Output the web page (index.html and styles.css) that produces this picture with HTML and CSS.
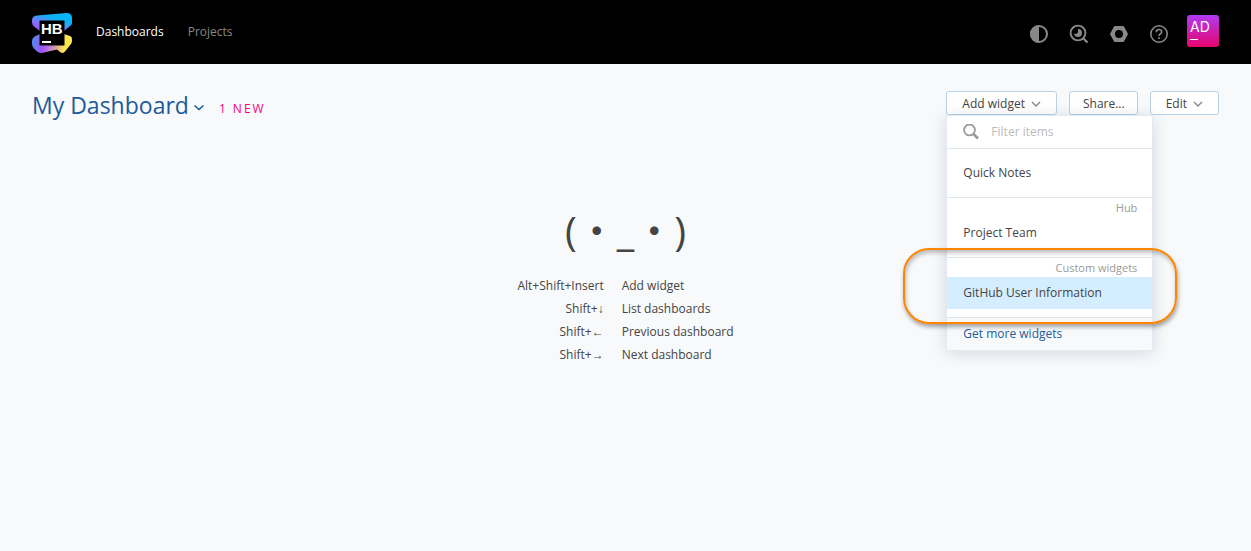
FILE: index.html
```html
<!DOCTYPE html>
<html lang="en">
<head>
<meta charset="utf-8">
<title>My Dashboard</title>
<link rel="stylesheet" href="styles.css">
</head>
<body>
<header class="header">
  <a class="logo" href="#" aria-label="Hub">
    <svg width="40" height="40" viewBox="0 0 40 40">
      <defs>
        <linearGradient id="top" x1="0" y1="0.8" x2="0.45" y2="0.2">
          <stop offset="0" stop-color="#a052ff"/><stop offset="0.45" stop-color="#7a78ff"/><stop offset="1" stop-color="#0cb4f6"/>
        </linearGradient>
        <linearGradient id="bottom" x1="0" y1="0.2" x2="1" y2="0.3">
          <stop offset="0" stop-color="#4a8cf0"/><stop offset="0.32" stop-color="#a052ff"/><stop offset="0.65" stop-color="#d8a5a0"/><stop offset="0.85" stop-color="#fde74a"/>
        </linearGradient>
      </defs>
      <path fill="url(#top)" d="M5 2.500 34.500 0Q40 0 40 5V10Q40 12 38 13L32 18H8L2 13.500Q0 12 0 9V7.500Q0 3 5 2.500Z"/>
      <path fill="url(#bottom)" d="M8 21H32L38 23Q40 23.500 40 26V28Q40 29.500 39 31L33 38.500Q31 41 28 39L25 36.500 11 39.700Q7 40.500 4.500 38L1.500 35Q0 33.500 0 30.500V28Q0 25 2.500 23.500Z"/>
      <path d="M7.500 7.500H32.500V32.500H7.500Z"/>
      <path fill="#fff" d="M10 28H19V30H10Z"/>
      <text class="logo-text" x="9" y="21">HB</text>
    </svg>
  </a>
  <nav class="nav">
    <a class="nav-link nav-link-active" href="#">Dashboards</a>
    <a class="nav-link" href="#">Projects</a>
  </nav>
  <div class="tools">
    <button class="tool" aria-label="Theme"><svg width="20" height="20" viewBox="0 0 20 20"><circle cx="10" cy="10" r="8" fill="none" stroke="currentColor" stroke-width="2"/><path fill="currentColor" d="M10 1a9 9 0 0 0 0 18Z"/></svg></button>
    <button class="tool" aria-label="Search"><svg width="20" height="20" viewBox="0 0 20 20"><circle cx="9" cy="9" r="7.400" fill="none" stroke="currentColor" stroke-width="1.900"/><path d="m14 14 4.500 4.500" stroke="currentColor" stroke-width="2.200"/><path fill="currentColor" d="M9 5a4 4 0 1 1-4 4 2.200 2.200 0 0 0 4-1.200Z"/></svg></button>
    <button class="tool" aria-label="Administration"><svg width="20" height="20" viewBox="0 0 20 20"><path fill="currentColor" fill-rule="evenodd" d="M6 2h8q.7 0 1 .6l3.800 6.800q.3.600 0 1.200L15 17.400q-.3.600-1 .6H6q-.7 0-1-.6L1.200 10.600q-.3-.6 0-1.200L5 2.600Q5.300 2 6 2ZM10 6a4 4 0 1 0 0 8 4 4 0 0 0 0-8Z"/></svg></button>
    <button class="tool" aria-label="Help"><svg width="20" height="20" viewBox="0 0 20 20" fill="none" stroke="currentColor"><circle cx="10" cy="10" r="8.200" stroke-width="1.600"/><path stroke-width="1.700" d="M7.300 8.200C7.300 4.600 12.700 4.700 12.700 8c0 1.900-2.700 1.900-2.700 4M10 13.300V15"/></svg></button>
    <button class="avatar" aria-label="Profile"><span class="avatar-name">AD</span><span class="avatar-line"></span></button>
  </div>
</header>
<main class="page">
  <div class="titlebar">
    <h1 class="title"><button class="title-button">My Dashboard <svg class="title-chevron" width="12" height="8" viewBox="0 0 12 8"><path d="m1.500 1.500 4.500 4 4.500-4" fill="none" stroke="currentColor" stroke-width="1.600"/></svg></button></h1>
    <a class="news" href="#">1 NEW</a>
    <div class="actions">
      <div class="dropdown">
        <button class="button">Add widget <svg class="chevron" width="10" height="6" viewBox="0 0 10 6"><path d="m1 1 4 4 4-4" fill="none" stroke="currentColor" stroke-width="1.400"/></svg></button>
        <div class="menu">
          <label class="filter">
            <svg width="16" height="16" viewBox="0 0 16 16" fill="none" stroke="currentColor"><circle cx="6.500" cy="6" r="5.400" stroke-width="1.800"/><path d="m10.500 10 4.500 4.500" stroke-width="2.600"/></svg>
            <input class="filter-input" type="text" placeholder="Filter items" aria-label="Filter items">
          </label>
          <div class="group group-first"><button class="item">Quick Notes</button></div>
          <div class="group"><div class="group-title">Hub</div><button class="item">Project Team</button></div>
          <div class="group"><div class="group-title">Custom widgets</div><button class="item item-active">GitHub User Information</button></div>
          <a class="more" href="#">Get more widgets</a>
          <div class="highlight"></div>
        </div>
      </div>
      <button class="button button-plain">Share...</button>
      <button class="button">Edit <svg class="chevron" width="10" height="6" viewBox="0 0 10 6"><path d="m1 1 4 4 4-4" fill="none" stroke="currentColor" stroke-width="1.400"/></svg></button>
    </div>
  </div>
  <section class="empty">
    <div class="face">(・_・)</div>
    <table class="shortcuts">
      <tr><td class="keys">Alt+Shift+Insert</td><td>Add widget</td></tr>
      <tr><td class="keys">Shift+↓</td><td>List dashboards</td></tr>
      <tr><td class="keys">Shift+←</td><td>Previous dashboard</td></tr>
      <tr><td class="keys">Shift+→</td><td>Next dashboard</td></tr>
    </table>
  </section>
</main>
</body>
</html>
```
FILE: styles.css
```css
* { box-sizing: border-box; }
body {
  margin: 0;
  min-height: 100vh;
  background: #f7f9fb;
  color: #444;
  font: 12px/20px "Open Sans", "Liberation Sans", "Noto Sans CJK JP", sans-serif;
}
button, input { margin: 0; padding: 0; border: 0; background: none; color: inherit; font: inherit; }
a { text-decoration: none; }
svg { display: block; }
.header { display: flex; align-items: center; height: 64px; padding: 0 32px; background: #000; }
.logo { padding-top: 2px; }
.logo-text { font: bold 15px "Liberation Sans", sans-serif; fill: #fff; }
.nav { display: flex; gap: 24px; margin-left: 24px; }
.nav-link { color: #888; }
.nav-link-active { color: #fff; }
.tools { display: flex; align-items: center; gap: 20px; margin-left: auto; color: #888; }
.tool { padding-top: 4px; }
.avatar {
  display: flex;
  flex-direction: column;
  gap: 4px;
  width: 32px;
  height: 32px;
  margin-left: -2px;
  margin-bottom: 2px;
  padding: 4px 3px;
  border-radius: 3px;
  background: linear-gradient(#b03af0, #e8046c);
  color: #fff;
  text-align: left;
}
.avatar-name { font: 14px/16px Inter, sans-serif; }
.avatar-line { width: 8px; height: 1px; background: #fff; }
.titlebar { display: flex; align-items: center; padding: 25px 32px 0; }
.title { margin: 0; font: 23px/32px "Open Sans", sans-serif; }
.title-button { display: flex; align-items: center; gap: 4px; color: #1f5b99; }
.title-chevron { margin-top: 6px; }
.news { margin-left: 14px; padding-top: 8px; color: #f0047f; letter-spacing: 2px; }
.actions { display: flex; gap: 12px; margin-left: auto; padding-bottom: 4px; }
.dropdown { position: relative; }
.button {
  display: flex;
  align-items: center;
  gap: 6px;
  height: 24px;
  padding: 1px 15px 0;
  border: 1px solid #b8d1e5;
  border-radius: 3px;
  background: #fff;
}
.button-plain { padding: 1px 12px 0 13px; }
.chevron { color: #888; }
.menu {
  position: absolute;
  top: 100%;
  left: 0;
  width: 207px;
  border: 1px solid #e4e9ef;
  border-radius: 2px;
  background: #fff;
  box-shadow: 0 2px 16px rgba(0, 42, 76, 0.15);
}
.filter { display: flex; align-items: center; gap: 12px; height: 33px; padding: 0 16px; border-bottom: 1px solid #dfe5eb; color: #999; }
.filter-input { flex: 1; min-width: 0; }
.filter-input::placeholder { color: #bbb; opacity: 1; }
.group { padding-bottom: 8px; border-bottom: 1px solid #dfe5eb; }
.group-first { padding-top: 8px; }
.group-title { padding-right: 15px; color: #999; font-size: 11px; line-height: 19px; text-align: right; }
.item { display: block; width: 100%; height: 32px; padding: 0 16px; text-align: left; }
.item-active { background: #d4edff; }
.more { display: block; height: 32px; padding: 0 16px; background: #f7f9fb; color: #1f5b99; line-height: 32px; }
.highlight {
  position: absolute;
  right: -25px;
  bottom: 26px;
  left: -44px;
  height: 76px;
  border: 2px solid #ff8400;
  border-radius: 26px;
  box-shadow: 1px 3px 4px rgba(0, 0, 0, 0.35), inset 1px 3px 4px rgba(0, 0, 0, 0.25);
}
.empty { display: flex; flex-direction: column; align-items: center; padding-top: 80px; }
.face { font-size: 40px; line-height: 60px; }
.shortcuts { margin-top: 13px; border-spacing: 0; }
.shortcuts td { height: 23px; padding: 0 0 0 18px; }
.shortcuts .keys { padding: 0; text-align: right; }
```
